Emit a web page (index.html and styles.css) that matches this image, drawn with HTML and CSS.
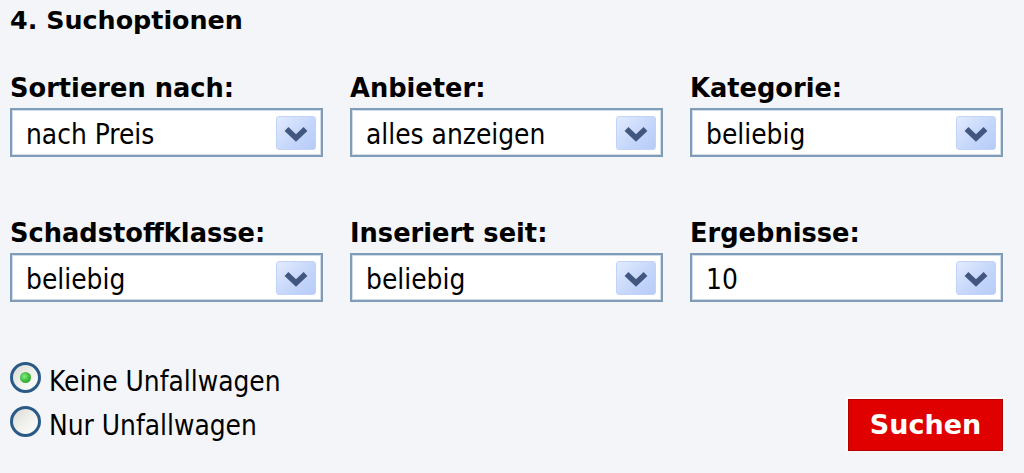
FILE: index.html
```html
<!DOCTYPE html>
<html lang="de">
<head>
<meta charset="utf-8">
<title>Suchoptionen</title>
<link rel="stylesheet" href="styles.css">
</head>
<body>
<div class="page">
  <h1 class="title">4. Suchoptionen</h1>
  <div class="grid">
    <div class="field">
      <div class="label">Sortieren nach:</div>
      <div class="select"><span class="value">nach Preis</span><span class="arrow"><svg viewBox="0 0 40 34" width="40" height="34"><path d="M10.5 13 L20 22 L29.5 13" fill="none" stroke="#42577f" stroke-width="5.5"/></svg></span></div>
    </div>
    <div class="field">
      <div class="label">Anbieter:</div>
      <div class="select"><span class="value">alles anzeigen</span><span class="arrow"><svg viewBox="0 0 40 34" width="40" height="34"><path d="M10.5 13 L20 22 L29.5 13" fill="none" stroke="#42577f" stroke-width="5.5"/></svg></span></div>
    </div>
    <div class="field">
      <div class="label">Kategorie:</div>
      <div class="select"><span class="value">beliebig</span><span class="arrow"><svg viewBox="0 0 40 34" width="40" height="34"><path d="M10.5 13 L20 22 L29.5 13" fill="none" stroke="#42577f" stroke-width="5.5"/></svg></span></div>
    </div>
    <div class="field">
      <div class="label">Schadstoffklasse:</div>
      <div class="select"><span class="value">beliebig</span><span class="arrow"><svg viewBox="0 0 40 34" width="40" height="34"><path d="M10.5 13 L20 22 L29.5 13" fill="none" stroke="#42577f" stroke-width="5.5"/></svg></span></div>
    </div>
    <div class="field">
      <div class="label">Inseriert seit:</div>
      <div class="select"><span class="value">beliebig</span><span class="arrow"><svg viewBox="0 0 40 34" width="40" height="34"><path d="M10.5 13 L20 22 L29.5 13" fill="none" stroke="#42577f" stroke-width="5.5"/></svg></span></div>
    </div>
    <div class="field">
      <div class="label">Ergebnisse:</div>
      <div class="select"><span class="value">10</span><span class="arrow"><svg viewBox="0 0 40 34" width="40" height="34"><path d="M10.5 13 L20 22 L29.5 13" fill="none" stroke="#42577f" stroke-width="5.5"/></svg></span></div>
    </div>
  </div>
  <div class="bottom">
    <div class="radios">
      <div class="radio-row"><span class="radio checked"></span><span class="radio-text">Keine Unfallwagen</span></div>
      <div class="radio-row"><span class="radio"></span><span class="radio-text">Nur Unfallwagen</span></div>
    </div>
    <button class="btn" type="button">Suchen</button>
  </div>
</div>
</body>
</html>
```
FILE: styles.css
```css
html, body {
  margin: 0;
  padding: 0;
  background: #f4f5f8;
}

.page {
  padding: 5px 0 0 10px;
  width: 993px;
  color: #000;
  font-family: "DejaVu Sans Condensed", "DejaVu Sans", sans-serif;
  font-stretch: condensed;
  font-size: 27.8px;
}

.title {
  margin: 0;
  font-family: "DejaVu Sans", sans-serif;
  font-stretch: normal;
  font-weight: bold;
  font-size: 25.4px;
  line-height: 30px;
}

.grid {
  margin-top: 38px;
  display: grid;
  grid-template-columns: repeat(3, 313px);
  column-gap: 27px;
  row-gap: 61px;
}

.label {
  font-family: "DejaVu Sans", sans-serif;
  font-stretch: normal;
  font-weight: bold;
  font-size: 25.7px;
  line-height: 30px;
  margin-bottom: 5px;
  white-space: nowrap;
}

.select {
  box-sizing: border-box;
  height: 49px;
  display: flex;
  align-items: center;
  background: #fff;
  border: 2px solid #7f9db9;
  box-shadow: inset 0 0 0 1px #d3dde8;
  padding: 0 5px 0 14px;
}

.value {
  flex: 1;
  padding-top: 4px;
  line-height: 41px;
  white-space: nowrap;
}

.arrow {
  box-sizing: border-box;
  width: 40px;
  height: 34px;
  border: 1px solid #c2d3fb;
  border-radius: 3px;
  background: linear-gradient(135deg, #e2ebfe 0%, #c6d7fb 55%, #b6cbf7 100%);
}

.arrow svg {
  display: block;
  margin: -1px;
}

.bottom {
  margin-top: 58px;
  display: flex;
  justify-content: space-between;
  align-items: flex-start;
}

.radio-row {
  display: flex;
  align-items: flex-start;
  height: 44px;
}

.radio {
  box-sizing: border-box;
  width: 31px;
  height: 31px;
  margin-top: 2px;
  margin-right: 8px;
  border-radius: 50%;
  border: 3px solid #2a5b88;
  background: linear-gradient(135deg, #dcdcd4 0%, #f0f0ec 50%, #ffffff 100%);
  display: flex;
  align-items: center;
  justify-content: center;
}

.radio.checked::after {
  content: "";
  width: 11px;
  height: 11px;
  border-radius: 50%;
  background: radial-gradient(circle at 40% 40%, #86ec86 0%, #3cbc3c 50%, #1f9a1f 100%);
}

.radio-text {
  line-height: 32px;
  padding-top: 6px;
  white-space: nowrap;
}

.btn {
  box-sizing: border-box;
  margin-top: 39px;
  width: 155px;
  height: 52px;
  padding: 0;
  border: 1px solid #b50000;
  background: #e10000;
  box-shadow: 0 0 0 2px rgba(255, 255, 255, 0.8);
  color: #fff;
  font-family: "DejaVu Sans", sans-serif;
  font-weight: bold;
  font-size: 27px;
  line-height: 50px;
  text-align: center;
}
```
